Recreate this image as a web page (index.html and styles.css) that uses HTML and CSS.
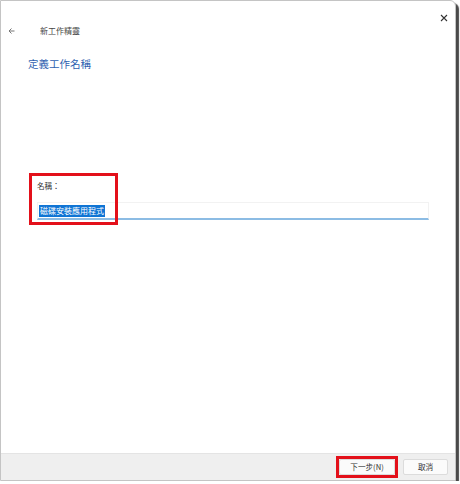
FILE: index.html
```html
<!DOCTYPE html>
<html lang="zh-Hant">
<head>
<meta charset="utf-8">
<link rel="stylesheet" href="styles.css">
</head>
<body>
<div class="window">
  <div class="titlebar">
    <svg class="close" width="8" height="8" viewBox="0 0 8 8"><path d="M1 1L7 7M7 1L1 7" stroke="#333" stroke-width="1.1"/></svg>
  </div>
  <div class="nav">
    <svg class="back" width="7" height="6" viewBox="0 0 7 6"><path d="M6.5 3H1M3.5 0.5L1 3L3.5 5.5" stroke="#777" stroke-width="1" fill="none"/></svg>
    <span class="title">新工作精靈</span>
  </div>
  <h1 class="heading">定義工作名稱</h1>
  <div class="content">
    <div class="field">
      <label class="label">名稱：</label>
      <div class="input"><span class="sel">磁碟安裝應用程式</span></div>
      <div class="mark mark-field"></div>
    </div>
  </div>
  <div class="footer">
    <div class="btnwrap">
      <button class="btn btn-next">下一步(N)</button>
      <div class="mark mark-btn"></div>
    </div>
    <button class="btn btn-cancel">取消</button>
  </div>
</div>
</body>
</html>
```

FILE: styles.css
```css
* { box-sizing: border-box; }
html, body { margin: 0; padding: 0; background: #fff; }
body { font-family: "Noto Sans CJK TC", "Noto Sans", sans-serif; color: #333; }

.window {
  width: 456px;
  height: 481px;
  border: 1px solid #c4c4c4;
  border-top-right-radius: 6px;
  box-shadow: 3px 3px 1px #4a4a4a;
  background: #fff;
  display: flex;
  flex-direction: column;
  overflow: hidden;
}

.titlebar {
  height: 21px;
  display: flex;
  justify-content: flex-end;
  align-items: flex-end;
  padding-right: 7px;
}
.close { display: block; }

.nav {
  height: 18px;
  display: flex;
  align-items: center;
  padding-left: 7px;
}
.back { display: block; }
.title {
  margin-left: 25px;
  font-size: 8px;
  line-height: 12px;
  color: #444;
}

.heading {
  margin: 17px 0 0 27px;
  font-size: 10.5px;
  line-height: 14px;
  font-weight: normal;
  color: #2e5fb0;
}

.content {
  flex: 1;
  padding: 109px 26px 0 36px;
}
.field { position: relative; }
.label {
  display: block;
  font-size: 7.6px;
  line-height: 12px;
  color: #333;
}
.input {
  margin-top: 10px;
  height: 18px;
  border: 1px solid #f2f2f2;
  border-bottom: 2px solid #8cbce4;
  display: flex;
  align-items: center;
  padding-left: 1px;
}
.sel {
  background: #0f74d4;
  color: #fff;
  font-size: 8px;
  line-height: 12px;
  padding: 0 1px;
}
.mark {
  position: absolute;
  border: 3px solid #e3101a;
}
.mark-field {
  left: -8px;
  top: -7px;
  width: 89px;
  height: 52px;
}

.footer {
  height: 27px;
  background: #efefef;
  border-top: 1px solid #e4e4e4;
  display: flex;
  justify-content: flex-end;
  align-items: center;
  gap: 8px;
  padding-right: 7px;
}
.btnwrap { position: relative; }
.btn {
  display: block;
  height: 16px;
  border: 1px solid #dcdcdc;
  border-radius: 2px;
  background: #fbfbfb;
  font-family: "Noto Sans CJK TC", sans-serif;
  font-size: 7.6px;
  line-height: 12px;
  color: #333;
  padding: 0;
}
.btn-next { width: 56px; }
.btn-cancel { width: 45px; }
.mark-btn {
  left: -3px;
  top: -3px;
  width: 62px;
  height: 22px;
}
```
